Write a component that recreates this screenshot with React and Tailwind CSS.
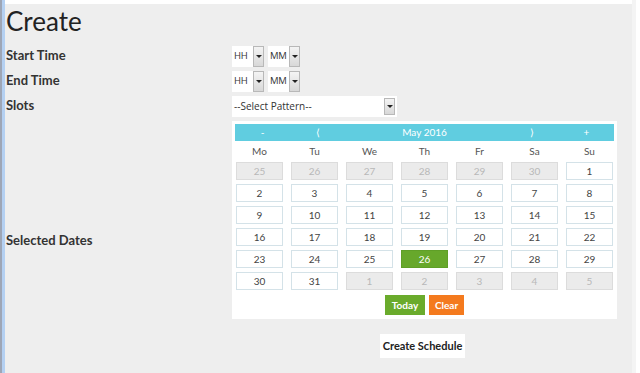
import React from 'react';

const weeks = [
  [[25, 1], [26, 1], [27, 1], [28, 1], [29, 1], [30, 1], [1, 0]],
  [[2, 0], [3, 0], [4, 0], [5, 0], [6, 0], [7, 0], [8, 0]],
  [[9, 0], [10, 0], [11, 0], [12, 0], [13, 0], [14, 0], [15, 0]],
  [[16, 0], [17, 0], [18, 0], [19, 0], [20, 0], [21, 0], [22, 0]],
  [[23, 0], [24, 0], [25, 0], [26, 2], [27, 0], [28, 0], [29, 0]],
  [[30, 0], [31, 0], [1, 1], [2, 1], [3, 1], [4, 1], [5, 1]],
];

const dayNames = ['Mo', 'Tu', 'We', 'Th', 'Fr', 'Sa', 'Su'];

function Arrow() {
  return (
    <span className="flex h-full w-[11px] items-center justify-center border border-[#b8b8b8] bg-gradient-to-b from-[#f4f4f4] to-[#d8d8d8]">
      <span className="h-0 w-0 border-x-[3px] border-t-[3px] border-x-transparent border-t-[#222]"></span>
    </span>
  );
}

function TimeSelect({ label, w }) {
  return (
    <div className="flex h-[21px] items-stretch bg-white">
      <span className={'flex items-center pl-[2px] font-["Open_Sans",sans-serif] text-[9.5px] tracking-[-0.2px] text-[#333] ' + w}>{label}</span>
      <Arrow />
    </div>
  );
}

function Label({ children, className = '' }) {
  return (
    <div className={'w-[227px] shrink-0 pl-[1px] font-["Lato",sans-serif] text-[13px] font-bold text-[#333] ' + className}>
      {children}
    </div>
  );
}

export default function App() {
  return (
    <div className="flex h-[373px] w-[640px] overflow-hidden bg-[#eeeeee] font-['Lato','Noto_Sans',sans-serif]">
      {/* window edge */}
      <div className="w-[2px] bg-[#9ea6b6]"></div>
      <div className="w-[3px] bg-[#b4d0f2]"></div>

      <div className="flex w-[627px] flex-col border-t-4 border-white">
        <h1 className="pl-px pt-[1px] text-[26px] leading-[32px] text-[#222]">Create</h1>

        <div className="mt-[8px] flex h-[22px] items-center">
          <Label>Start Time</Label>
          <div className="flex gap-[4px]">
            <TimeSelect label="HH" w="w-[21px]" />
            <TimeSelect label="MM" w="w-[21px]" />
          </div>
        </div>

        <div className="mt-[3px] flex h-[22px] items-center">
          <Label>End Time</Label>
          <div className="flex gap-[4px]">
            <TimeSelect label="HH" w="w-[21px]" />
            <TimeSelect label="MM" w="w-[21px]" />
          </div>
        </div>

        <div className="mt-[3px] flex h-[22px] items-center">
          <Label>Slots</Label>
          <div className="flex h-[21px] w-[165px] items-stretch bg-white">
            <span className="flex flex-1 items-center pl-[2px] font-['Open_Sans',sans-serif] text-[10px] text-[#333]">--Select Pattern--</span>
            <span className="py-[2px] pr-[2px]">
              <Arrow />
            </span>
          </div>
        </div>

        <div className="mt-[4px] flex">
          <Label className="pt-[110px]">Selected Dates</Label>
          <div className="w-[385px] bg-white px-[3px] pt-[3px] pb-[4px]">
            <div className="flex h-[17px] items-center bg-[#60cde0] text-[10px] text-white">
              <span className="w-[55px] text-center">-</span>
              <span className="w-[55px] text-center">⟨</span>
              <span className="flex-1 text-center">May 2016</span>
              <span className="w-[55px] text-center">⟩</span>
              <span className="w-[55px] text-center">+</span>
            </div>
            <div className="grid grid-cols-7 gap-x-[8px] px-[1px]">
              {dayNames.map((d) => (
                <div key={d} className="flex h-[21px] items-center justify-center text-[10px] text-[#555]">
                  {d}
                </div>
              ))}
            </div>
            <div className="grid grid-cols-7 gap-x-[8px] gap-y-[4px] px-[1px]">
              {weeks.flat().map(([n, kind], i) => (
                <div
                  key={i}
                  className={
                    'flex h-[18px] items-center justify-center border text-[10px] ' +
                    (kind === 2
                      ? 'border-[#5f9f27] bg-[#67a82b] text-white'
                      : kind === 1
                      ? 'border-[#dcdcdc] bg-[#ebebeb] text-[#b8b8b8]'
                      : 'border-[#d4e2e8] bg-white text-[#444]')
                  }
                >
                  {n}
                </div>
              ))}
            </div>
            <div className="mt-[5px] flex justify-center gap-[4px]">
              <button className="h-[20px] w-[40px] bg-[#6aab2c] text-[10px] font-bold text-white">Today</button>
              <button className="h-[20px] w-[35px] bg-[#f47a1e] text-[10px] font-bold text-white">Clear</button>
            </div>
          </div>
        </div>

        <div className="mt-[15px] flex">
          <div className="w-[375px] shrink-0"></div>
          <button className="h-[24px] w-[85px] bg-white font-['Lato',sans-serif] text-[11px] font-bold text-[#222]">
            Create Schedule
          </button>
        </div>
      </div>

      <div className="w-[4px] bg-[#f4f4f4]"></div>
      <div className="flex-1 bg-white"></div>
    </div>
  );
}
